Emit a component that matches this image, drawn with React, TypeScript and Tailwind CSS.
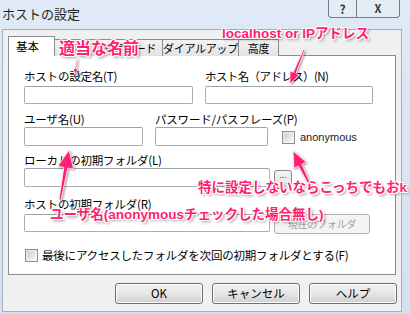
import React from "react";

const ui = "font-['Noto_Sans_CJK_JP',sans-serif]";
const note =
  "absolute z-30 whitespace-nowrap font-bold text-[#ff1f74] font-['Liberation_Sans','Noto_Sans_CJK_JP',sans-serif] [text-shadow:-1px_-1px_0_#fff,1px_-1px_0_#fff,-1px_1px_0_#fff,1px_1px_0_#fff,0_0_2px_#fff,2px_2px_3px_rgba(0,0,0,0.45)]";
const tab =
  "h-[17px] border border-l-0 border-b-0 border-[#898c95] bg-gradient-to-b from-[#f3f3f3] to-[#e3e3e3] text-[11px] tracking-[-0.3px] leading-[16px] text-center whitespace-nowrap";

function arrow(x1: number, y1: number, x2: number, y2: number, head: number, hw: number, sw: number) {
  const dx = x2 - x1;
  const dy = y2 - y1;
  const len = Math.hypot(dx, dy);
  const ux = dx / len;
  const uy = dy / len;
  const px = -uy;
  const py = ux;
  const nx = x2 - ux * head;
  const ny = y2 - uy * head;
  const t = sw * 0.25;
  const pts = [
    [x1 + px * t, y1 + py * t],
    [nx + px * sw / 2, ny + py * sw / 2],
    [nx + px * hw, ny + py * hw],
    [x2, y2],
    [nx - px * hw, ny - py * hw],
    [nx - px * sw / 2, ny - py * sw / 2],
    [x1 - px * t, y1 - py * t],
  ];
  return pts.map((p) => p[0].toFixed(1) + "," + p[1].toFixed(1)).join(" ");
}

function Field({ w, h = 18 }: { w: number; h?: number }) {
  return (
    <div
      className="border border-[#abadb3] border-t-[#9ea2a9] rounded-[2px] bg-white shrink-0"
      style={{ width: w, height: h }}
    />
  );
}

function Check() {
  return (
    <div className="w-[13px] h-[13px] border border-[#8f8f8f] bg-gradient-to-br from-[#dcdcdc] to-[#fbfbfb] p-[2px] shrink-0">
      <div className="w-full h-full bg-gradient-to-br from-[#cfcfcf] to-[#f4f4f4]" />
    </div>
  );
}

function Btn({ children }: { children: React.ReactNode }) {
  return (
    <div className="w-[88px] h-[21px] rounded-[3px] border border-[#707070] bg-gradient-to-b from-[#f2f2f2] via-[#e6e6e6] to-[#cfcfcf] flex items-center justify-center text-[11.5px] text-black shadow-[inset_0_0_0_1px_#fcfcfc]">
      {children}
    </div>
  );
}

export default function App() {
  return (
    <div className={`relative w-[410px] h-[314px] overflow-hidden bg-gradient-to-b from-[#dfeaf6] to-[#d3e1ef] ${ui} text-black`}>
      {/* title bar */}
      <div className="h-[29px] flex items-start justify-between">
        <div className="pl-[2px] pt-[5px] text-[13px] leading-[18px] text-[#1e1e1e]">ホストの設定</div>
        <div className="flex mr-[10px]">
          <div className="w-[29px] h-[18px] border border-t-0 border-[#6f7d8c] rounded-bl-[4px] bg-[#e6eef7]/70 flex items-center justify-center text-[12px] font-bold text-[#2e3a46] leading-none">
            ?
          </div>
          <div className="w-[43px] h-[18px] border border-t-0 border-l-0 border-[#6f7d8c] rounded-br-[4px] bg-[#e6eef7]/70 flex items-center justify-center text-[11px] font-bold text-[#2e3a46] leading-none">
            X
          </div>
        </div>
      </div>

      {/* window body */}
      <div className="ml-[2px] w-[400px] h-[283px] border border-[#a3afbc] bg-[#f0f0f0] flex flex-col">
        {/* tabs */}
        <div className="ml-[5px] mt-[6px] flex items-end h-[20px] relative z-10">
          <div className="w-[47px] h-[20px] bg-white border border-b-0 border-[#898c95] text-[11.5px] leading-[18px] pl-[7px]">基本</div>
          <div className={`w-[42px] ${tab}`}>拡張</div>
          <div className={`w-[66px] ${tab}`}>文字コード</div>
          <div className={`w-[76px] ${tab}`}>ダイアルアップ</div>
          <div className={`w-[40px] ${tab}`}>高度</div>
        </div>

        {/* panel */}
        <div className="ml-[5px] -mt-px w-[388px] h-[220px] border border-[#898c95] bg-white pl-[15px] pt-[12px] text-[11.5px] tracking-[-0.2px] leading-[16px] whitespace-nowrap">
          <div className="flex gap-[12px]">
            <div>
              <div>ホストの設定名(T)</div>
              <div className="mt-[2px]"><Field w={169} /></div>
            </div>
            <div>
              <div className="tracking-[-0.6px]">ホスト名（アドレス）(N)</div>
              <div className="mt-[2px]"><Field w={168} /></div>
            </div>
          </div>

          <div className="flex items-end mt-[7px]">
            <div className="w-[119px]">
              <div>ユーザ名(U)</div>
              <Field w={119} h={19} />
            </div>
            <div className="ml-[12px] w-[113px]">
              <div>パスワード/パスフレーズ(P)</div>
              <Field w={113} h={19} />
            </div>
            <div className="ml-[14px] mb-[1px] flex items-center gap-[5px]">
              <Check />
              <span className="text-[11px] tracking-normal text-[#222] font-['Liberation_Sans',sans-serif]">anonymous</span>
            </div>
          </div>

          <div className="mt-[6px]">ローカルの初期フォルダ(L)</div>
          <div className="flex items-start gap-[4px]">
            <Field w={246} h={19} />
            <div className="mt-[2px] w-[18px] h-[19px] rounded-[3px] border border-[#8c8c8c] bg-gradient-to-b from-[#f6f6f6] to-[#dedede] text-[9px] leading-[8px] text-center text-[#666]">...</div>
          </div>

          <div className="mt-[7px]">ホストの初期フォルダ(R)</div>
          <div className="mt-[2px] flex items-start gap-[4px]">
            <Field w={246} h={18} />
            <div className="w-[96px] h-[20px] rounded-[3px] border border-[#adb2b5] bg-[#f4f4f4] text-[10px] leading-[18px] text-center text-[#a0a0a0]">現在のフォルダ</div>
          </div>

          <div className="mt-[13px] ml-[1px] flex items-center gap-[4px]">
            <Check />
            <span>最後にアクセスしたフォルダを次回の初期フォルダとする(F)</span>
          </div>
        </div>

        {/* buttons */}
        <div className="mt-[8px] pl-[112px] flex gap-[9px]">
          <Btn>OK</Btn>
          <Btn>キャンセル</Btn>
          <Btn>ヘルプ</Btn>
        </div>
      </div>

      {/* annotations */}
      <svg className="absolute inset-0 z-20 pointer-events-none [filter:drop-shadow(1px_1px_1px_rgba(0,0,0,0.4))]" width="410" height="314">
        <polygon points={arrow(77, 59, 75, 74, 5, 2.5, 1.6)} fill="#ff1f74" stroke="#fff" strokeWidth="0.8" />
        <polygon points={arrow(304, 50, 290, 84, 12, 5, 3)} fill="#ff1f74" stroke="#fff" strokeWidth="0.8" />
        <polygon points={arrow(311, 187, 293, 151, 16, 7, 4)} fill="#ff1f74" stroke="#fff" strokeWidth="0.8" />
        <polygon points={arrow(60, 200, 69, 150, 18, 8, 4)} fill="#ff1f74" stroke="#fff" strokeWidth="0.8" />
      </svg>
      <div className={`${note} left-[59px] top-[39px] text-[16px] leading-[20px]`}>適当な名前</div>
      <div className={`${note} left-[222px] top-[25px] text-[13.5px] leading-[18px]`}>localhost or IPアドレス</div>
      <div className={`${note} left-[198px] top-[179px] text-[13.5px] leading-[18px]`}>特に設定しないならこっちでもおk</div>
      <div className={`${note} left-[50px] top-[206px] text-[13.5px] leading-[18px]`}>ユーザ名(anonymousチェックした場合無し)</div>
    </div>
  );
}
